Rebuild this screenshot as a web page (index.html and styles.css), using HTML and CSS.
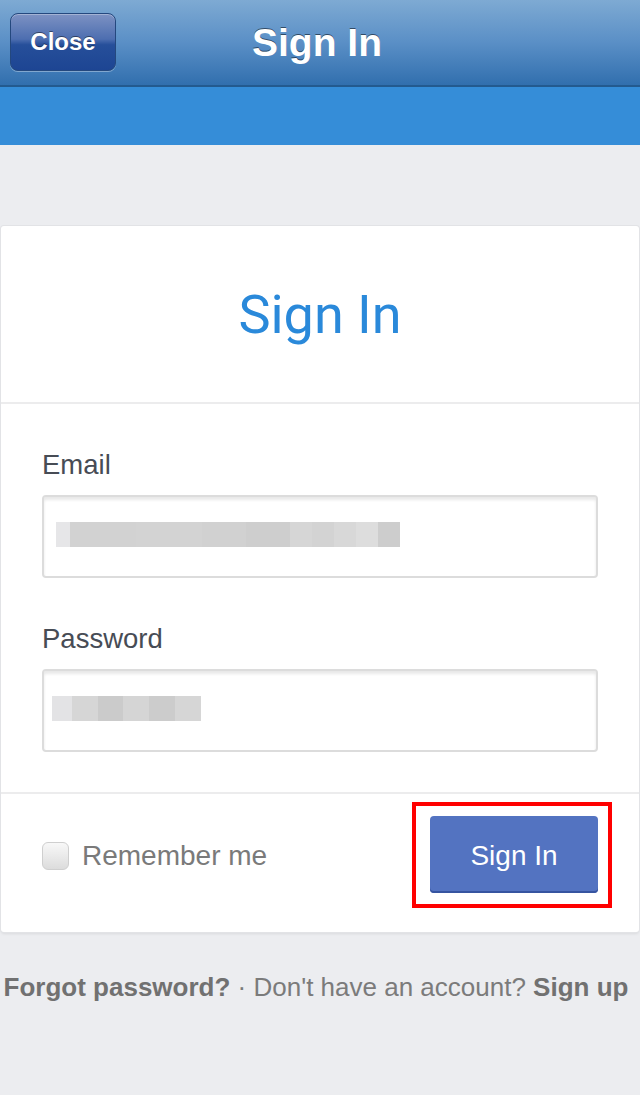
FILE: index.html
```html
<!DOCTYPE html>
<html>
<head>
<meta charset="utf-8">
<link rel="stylesheet" href="styles.css">
</head>
<body>
<header class="navbar">
  <button class="close-btn">Close</button>
  <h1 class="nav-title">Sign In</h1>
  <span class="nav-spacer"></span>
</header>
<div class="band"></div>
<main class="page">
  <section class="card">
    <div class="card-head">Sign In</div>
    <div class="card-body">
      <label class="field-label">Email</label>
      <div class="input">
        <div class="blur blur-email">
          <span style="width:14px;background:#e6e6e8"></span>
          <span style="width:66px;background:#d2d2d2"></span>
          <span style="width:66px;background:#d3d3d3"></span>
          <span style="width:44px;background:#d1d1d1"></span>
          <span style="width:44px;background:#cecece"></span>
          <span style="width:22px;background:#d6d6d6"></span>
          <span style="width:22px;background:#d3d3d3"></span>
          <span style="width:22px;background:#d8d8d8"></span>
          <span style="width:22px;background:#dddddd"></span>
          <span style="width:22px;background:#cdcdcd"></span>
        </div>
      </div>
      <label class="field-label pw-label">Password</label>
      <div class="input">
        <div class="blur blur-pw">
          <span style="width:20px;background:#e3e3e5"></span>
          <span style="width:26px;background:#d6d6d6"></span>
          <span style="width:25px;background:#cbcbcb"></span>
          <span style="width:26px;background:#d5d5d5"></span>
          <span style="width:26px;background:#cccccc"></span>
          <span style="width:26px;background:#d6d6d6"></span>
        </div>
      </div>
    </div>
    <div class="card-foot">
      <label class="remember"><span class="checkbox"></span>Remember me</label>
      <div class="highlight">
        <button class="signin-btn">Sign In</button>
      </div>
    </div>
  </section>
  <p class="links"><b>Forgot password?</b> · Don't have an account? <b>Sign up</b></p>
</main>
</body>
</html>
```

FILE: styles.css
```css
html, body {
  margin: 0;
  padding: 0;
}
body {
  width: 640px;
  height: 1095px;
  background: #ecedf0;
  font-family: "Liberation Sans", Arial, sans-serif;
  overflow: hidden;
}
.navbar {
  height: 87px;
  display: flex;
  align-items: center;
  justify-content: space-between;
  padding: 0 10px;
  box-sizing: border-box;
  background: linear-gradient(#7eaad3, #5a8fc6 50%, #316fae);
  border-bottom: 2px solid #235a8f;
}
.close-btn {
  width: 106px;
  height: 58px;
  border: 1px solid #24487e;
  border-radius: 8px;
  background: linear-gradient(#7d92c3, #4d6eb0 45%, #264f9a 55%, #1d4593);
  box-shadow: 0 1px 0 rgba(255,255,255,0.35), inset 0 1px 0 rgba(255,255,255,0.3);
  color: #fff;
  font-family: "Liberation Sans", Arial, sans-serif;
  font-weight: bold;
  font-size: 24px;
  text-shadow: 0 -1px 0 rgba(0,0,0,0.45);
  padding: 0;
  margin-top: -1px;
}
.nav-title {
  margin: 0;
  color: #fff;
  font-size: 39px;
  font-weight: bold;
  text-shadow: 0 -1px 0 rgba(0,0,0,0.5);
}
.nav-spacer {
  width: 112px;
}
.band {
  height: 58px;
  background: #358dd8;
}
.page {
  padding-top: 81px;
}
.card {
  margin: 0 1px;
  background: #fff;
  border-radius: 3px;
  box-shadow: 0 0 0 1px #e2e3e6, 0 2px 3px rgba(0,0,0,0.08);
}
.card-head {
  height: 178px;
  display: flex;
  align-items: center;
  justify-content: center;
  font-family: "Roboto", "Liberation Sans", sans-serif;
  font-size: 54px;
  color: #2a89da;
  border-bottom: 2px solid #ececed;
  padding-top: 0;
  box-sizing: border-box;
}
.card-body {
  padding: 45px 41px 40px 41px;
  border-bottom: 2px solid #ececed;
}
.field-label {
  display: block;
  font-size: 27.5px;
  color: #474c55;
  line-height: 32px;
  margin-bottom: 14px;
}
.pw-label {
  margin-top: 45px;
}
.input {
  height: 79px;
  border: 2px solid #dcdcdc;
  border-radius: 4px;
  box-shadow: inset 0 3px 3px rgba(0,0,0,0.09);
  display: flex;
  align-items: center;
}
.blur {
  display: flex;
  height: 25px;
}
.blur span {
  display: block;
  height: 100%;
}
.blur-email {
  margin-left: 12px;
  margin-top: -4px;
}
.blur-pw {
  margin-left: 8px;
  margin-top: -4px;
}
.card-foot {
  height: 138px;
  display: flex;
  align-items: center;
  justify-content: space-between;
  padding: 0 27px 16px 41px;
  box-sizing: border-box;
}
.remember {
  display: flex;
  align-items: center;
  font-size: 28px;
  color: #7a7a7a;
  margin-top: 2px;
}
.checkbox {
  width: 25px;
  height: 26px;
  border: 1px solid #cfcfcf;
  border-radius: 6px;
  background: linear-gradient(#f8f8f8, #dcdcdc);
  margin-right: 13px;
}
.highlight {
  border: 4px solid #ff0000;
  padding: 10px 10px 11px 14px;
}
.signin-btn {
  width: 168px;
  height: 77px;
  border: none;
  border-radius: 4px;
  background: #5373c1;
  box-shadow: inset 0 -2px 0 #3654a0;
  color: #fff;
  font-family: "Liberation Sans", Arial, sans-serif;
  font-size: 28px;
  display: block;
  padding: 2px 0 0 0;
}
.links {
  margin: 40px 0 0 0;
  text-align: center;
  font-size: 26px;
  line-height: 30px;
  color: #7b7b7b;
  padding-right: 8px;
}
.links b {
  color: #717171;
}
```
